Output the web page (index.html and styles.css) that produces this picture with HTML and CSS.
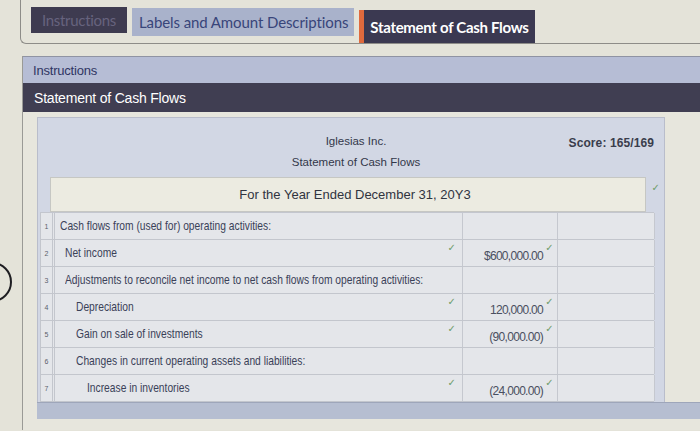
FILE: index.html
```html
<!DOCTYPE html>
<html>
<head>
<meta charset="utf-8">
<link rel="stylesheet" href="styles.css">
</head>
<body>
<div class="tabs">
  <div class="tab tab-instr">Instructions</div>
  <div class="tab tab-labels">Labels and Amount Descriptions</div>
  <div class="tab tab-active">Statement of Cash Flows</div>
</div>
<div class="panel">
  <div class="instr">Instructions</div>
  <div class="darkbar">Statement of Cash Flows</div>
  <div class="content">
    <div class="sheet">
      <div class="head">
        <div class="hline">Iglesias Inc.</div>
        <div class="hline">Statement of Cash Flows</div>
        <div class="score">Score: 165/169</div>
      </div>
      <div class="daterow">For the Year Ended December 31, 20Y3<span class="chk chk-date">✓</span></div>
      <div class="table">
        <div class="row"><div class="num">1</div><div class="lbl l0"><span class="txt">Cash flows from (used for) operating activities:</span></div><div class="amt"></div><div class="amt"></div></div>
        <div class="row"><div class="num">2</div><div class="lbl l1"><span class="txt">Net income</span><span class="chk">✓</span></div><div class="amt">$600,000.00<span class="chk">✓</span></div><div class="amt"></div></div>
        <div class="row"><div class="num">3</div><div class="lbl l1"><span class="txt">Adjustments to reconcile net income to net cash flows from operating activities:</span></div><div class="amt"></div><div class="amt"></div></div>
        <div class="row"><div class="num">4</div><div class="lbl l2"><span class="txt">Depreciation</span><span class="chk">✓</span></div><div class="amt">120,000.00<span class="chk">✓</span></div><div class="amt"></div></div>
        <div class="row"><div class="num">5</div><div class="lbl l2"><span class="txt">Gain on sale of investments</span><span class="chk">✓</span></div><div class="amt">(90,000.00)<span class="chk">✓</span></div><div class="amt"></div></div>
        <div class="row"><div class="num">6</div><div class="lbl l2"><span class="txt">Changes in current operating assets and liabilities:</span></div><div class="amt"></div><div class="amt"></div></div>
        <div class="row"><div class="num">7</div><div class="lbl l3"><span class="txt">Increase in inventories</span><span class="chk">✓</span></div><div class="amt">(24,000.00)<span class="chk">✓</span></div><div class="amt"></div></div>
      </div>
    </div>
    <div class="bottombar"></div>
  </div>
</div>
<div class="bezel"></div>
</body>
</html>
```
FILE: styles.css
```css
html, body {
  margin: 0;
  padding: 0;
}
body {
  width: 700px;
  height: 431px;
  overflow: hidden;
  background: #e4e3d9;
  font-family: "Liberation Sans", Arial, sans-serif;
  position: relative;
}
.tabs {
  margin-left: 20px;
  height: 44px;
  box-sizing: border-box;
  border-left: 1px solid #8d8c88;
  border-bottom: 1px solid #8d8c88;
  border-bottom-left-radius: 6px;
  padding: 7px 0 0 10px;
  display: flex;
  align-items: flex-start;
  gap: 5px;
}
.tab {
  font-family: Lato, "Liberation Sans", sans-serif;
  font-size: 15px;
  display: flex;
  align-items: center;
  padding: 0 6px;
}
.tab-instr {
  background: #3e3b50;
  color: #67637e;
  height: 26px;
  width: 84px;
  justify-content: center;
  letter-spacing: -0.3px;
}
.tab-labels {
  background: #a9b2cb;
  color: #38457a;
  height: 28px;
  margin-top: 1px;
  font-size: 15px;
  padding: 0 6px 0 7px;
  letter-spacing: -0.1px;
}
.tab-active {
  background: #3b3951;
  color: #ffffff;
  font-weight: bold;
  height: 33px;
  margin-top: 3px;
  border-left: 5px solid #e06a3d;
  padding: 0 6px 0 6px;
  letter-spacing: -0.3px;
}
.panel {
  margin-top: 12px;
  margin-left: 22px;
  border-left: 1px solid #9a9a96;
}
.instr {
  background: #b6bdd5;
  height: 26px;
  border-top: 1px solid #8f93a3;
  color: #2f3563;
  font-size: 13px;
  display: flex;
  align-items: center;
  padding-left: 10px;
  letter-spacing: -0.2px;
}
.darkbar {
  background: #403e52;
  height: 29px;
  color: #ffffff;
  font-size: 14px;
  display: flex;
  align-items: center;
  padding-left: 11px;
  letter-spacing: -0.2px;
}
.content {
  padding: 5px 0 11px 14px;
  background: #e7e6dd;
}
.sheet {
  width: 628px;
  box-sizing: border-box;
  background: #d2d7e4;
  border: 1px solid #b9bdcb;
  border-bottom: none;
  padding: 0 0 0 2px;
}
.head {
  position: relative;
  height: 59px;
  display: flex;
  flex-direction: column;
  align-items: center;
  padding-top: 17px;
  box-sizing: border-box;
  color: #33384a;
  font-size: 11.5px;
}
.hline {
  height: 24px;
  margin-left: 8px;
}
.score {
  position: absolute;
  right: 10px;
  top: 18px;
  font-size: 12px;
  font-weight: bold;
  color: #3a3d4c;
  letter-spacing: 0.1px;
}
.daterow {
  position: relative;
  margin: 0 18px 0 10px;
  height: 35px;
  box-sizing: border-box;
  background: #ecebe1;
  border: 1px solid #c6c7c3;
  display: flex;
  align-items: center;
  justify-content: center;
  font-size: 13px;
  color: #30343f;
  padding-left: 14px;
}
.chk {
  position: absolute;
  color: #6e9c6a;
  font-size: 10px;
  font-family: "DejaVu Sans", sans-serif;
  line-height: 1;
}
.chk-date {
  right: -15px;
  top: 5px;
}
.table {
  margin-right: 10px;
  border-top: 1px solid #c3c6ce;
}
.row {
  display: grid;
  grid-template-columns: 15px 408px 95px 97px;
  height: 26px;
  border-bottom: 1px solid #c3c6cd;
  background: #e4e6ea;
}
.row > div {
  position: relative;
  display: flex;
  align-items: center;
  box-sizing: border-box;
}
.num {
  font-size: 7px;
  color: #5b5f6a;
  justify-content: center;
  border-left: 1px solid #c3c6cd;
  border-right: 3px double #c3c6cd;
}
.lbl {
  font-size: 13.5px;
  color: #3a4158;
  white-space: nowrap;
  border-right: 1px solid #c5c8cf;
  padding-bottom: 2px;
}
.txt {
  display: inline-block;
  transform: scaleX(0.76);
  transform-origin: left center;
}
.lbl .chk {
  right: 6px;
  top: 3px;
}
.l0 { padding-left: 5px; }
.l1 { padding-left: 10px; }
.l2 { padding-left: 21px; }
.l3 { padding-left: 32px; }
.amt {
  font-size: 12px;
  color: #4a4f60;
  letter-spacing: -0.7px;
  justify-content: flex-end;
  padding-right: 14px;
  padding-top: 6px;
  border-right: 1px solid #c5c8cf;
}
.amt .chk {
  right: 4px;
  top: 3px;
}
.bottombar {
  height: 16px;
  background: #b6bed1;
  border-top: 1px solid #9ea6ba;
}
.bezel {
  position: absolute;
  left: -28px;
  top: 262px;
  width: 36px;
  height: 36px;
  border: 2px solid #1e1e22;
  border-radius: 50%;
}
```
